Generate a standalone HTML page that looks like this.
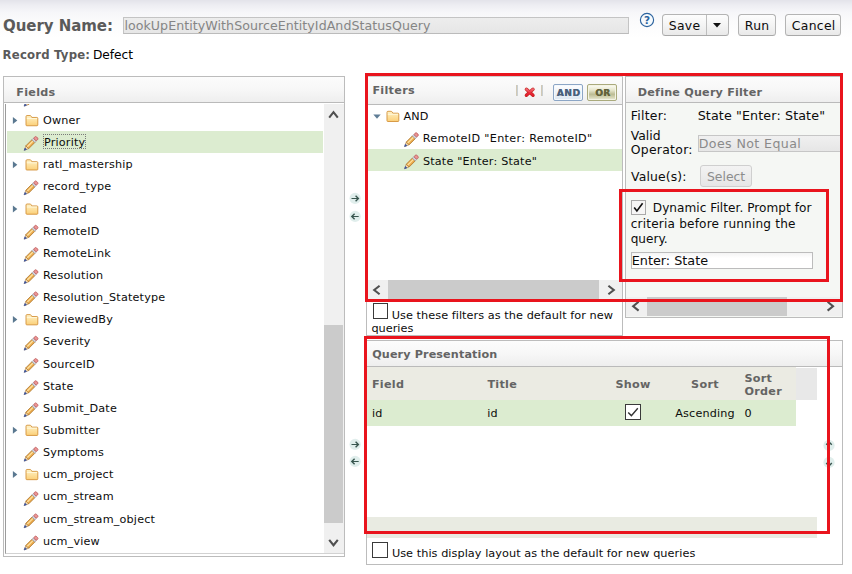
<!DOCTYPE html>
<html><head><meta charset="utf-8"><title>Query</title>
<style>
html,body{margin:0;padding:0;background:#fff;}
body{width:852px;height:574px;overflow:hidden;position:relative;font-family:"DejaVu Sans","Liberation Sans",sans-serif;font-size:11.4px;color:#0c0c0c;}
#root{position:absolute;left:0;top:0;width:852px;height:574px;overflow:hidden;background:#fff;}
.abs{position:absolute;}
.t{position:absolute;white-space:nowrap;line-height:1;}
#topgrad{left:0;top:0;width:852px;height:40px;background:linear-gradient(#e3e3ea 0px,#ededf2 5px,#f6f6f9 12px,#fbfbfc 22px,#fff 38px);}
.btn{position:absolute;box-sizing:border-box;border:1px solid #b4b4b4;border-bottom-color:#a8a8a8;border-radius:3.5px;background:linear-gradient(#fdfdfd,#f4f4f4 50%,#e9e9e9);top:14px;height:22px;}
.btn .t{font-size:12.4px;top:5px;margin-left:-0.2px;letter-spacing:0.3px;}
.panel{position:absolute;box-sizing:border-box;border:1px solid #bcbcbc;background:#fff;}
.phead{position:absolute;left:0;top:0;right:0;box-sizing:border-box;border-bottom:1px solid #bababa;background:linear-gradient(#fcfcfc,#f7f7f7 50%,#eeeeee);}
.ptitle{position:absolute;white-space:nowrap;line-height:1;font-weight:bold;color:#646464;font-size:11.2px;letter-spacing:0.3px;}
.row{position:absolute;left:0;right:0;height:22.2px;}
.sel{background:#dcecd0;}
.ic{position:absolute;overflow:visible;}
.red{position:absolute;box-sizing:border-box;border:3px solid #e9141d;}
.cb{position:absolute;box-sizing:border-box;border:1px solid #3a3a3a;background:#fff;}
</style></head><body>
<svg width="0" height="0" style="position:absolute">
<defs>
<linearGradient id="fg" x1="0" y1="0" x2="0" y2="1"><stop offset="0" stop-color="#fff3c8"/><stop offset="1" stop-color="#fbcf78"/></linearGradient>
<symbol id="folder" viewBox="0 0 14 12" overflow="visible">
<path d="M1.7 10.8 V2.4 Q1.7 1.4 2.7 1.4 H5.7 Q6.5 1.4 6.9 2.1 L7.5 3.3 H12.6 Q13.5 3.3 13.5 4.2 V10.8 Q13.5 11.6 12.7 11.6 H2.5 Q1.7 11.6 1.7 10.8 Z" fill="url(#fg)" stroke="#d4923a" stroke-width="0.9"/>
<path d="M2.5 4.4 H12.7" stroke="#fffbe6" stroke-width="0.8" fill="none"/>
</symbol>
<symbol id="pencil" viewBox="0 0 16 16" overflow="visible">
<g transform="translate(0.8,15.3) rotate(-45)">
<polygon points="0,0 4.4,-2 4.4,2" fill="#f2d8ac" stroke="#a87c44" stroke-width="0.6"/>
<polygon points="0,0 2.2,-1 2.2,1" fill="#3452a4" stroke="#3452a4" stroke-width="0.6"/>
<rect x="4.4" y="-2" width="8.6" height="4" fill="#ecaa4c" stroke="#b07a32" stroke-width="0.8"/>
<rect x="4.7" y="-1" width="8.1" height="1.3" fill="#fde2a0"/>
<rect x="13" y="-2" width="2" height="4" fill="#d6d6de" stroke="#94949e" stroke-width="0.6"/>
<rect x="15" y="-2" width="3.2" height="4" rx="1.4" fill="#ec9494" stroke="#bc5c5c" stroke-width="0.8"/>
</g>
</symbol>
<symbol id="tri" viewBox="0 0 5 8" overflow="visible"><polygon points="0.2,0.2 4.6,3.7 0.2,7.2" fill="#5a7890"/></symbol>
<symbol id="trid" viewBox="0 0 8 5" overflow="visible"><polygon points="0.3,0.4 7.7,0.4 4,4.6" fill="#5f7d96"/></symbol>
<symbol id="arrR" viewBox="0 0 12 13" overflow="visible"><circle cx="6" cy="6.4" r="5.6" fill="#e0eeec"/><path d="M2.4 6.5 H9" stroke="#38564f" stroke-width="1" fill="none"/><path d="M6.5 3.7 L9.3 6.5 L6.5 9.3" stroke="#38564f" stroke-width="1.4" fill="none"/></symbol>
<symbol id="arrL" viewBox="0 0 12 13" overflow="visible"><circle cx="6" cy="6.4" r="5.6" fill="#e0eeec"/><path d="M9.6 6.5 H3" stroke="#38564f" stroke-width="1" fill="none"/><path d="M5.5 3.7 L2.7 6.5 L5.5 9.3" stroke="#38564f" stroke-width="1.4" fill="none"/></symbol>
<symbol id="arrU" viewBox="0 0 12 13" overflow="visible"><circle cx="6.5" cy="6.4" r="5.6" fill="#e0eeec"/><path d="M6.5 9.8 V3.2" stroke="#38564f" stroke-width="1" fill="none"/><path d="M3.7 5.7 L6.5 2.9 L9.3 5.7" stroke="#38564f" stroke-width="1.4" fill="none"/></symbol>
<symbol id="arrD" viewBox="0 0 12 13" overflow="visible"><circle cx="6.5" cy="6.4" r="5.6" fill="#e0eeec"/><path d="M6.5 3 V9.6" stroke="#38564f" stroke-width="1" fill="none"/><path d="M3.7 7.1 L6.5 9.9 L9.3 7.1" stroke="#38564f" stroke-width="1.4" fill="none"/></symbol>
</defs></svg>
<div id="root">
<div id="topgrad" class="abs"></div>
<div class="t" style="left:3.0px;top:19.00px;font-size:15px;font-weight:bold;color:#5a5a5a;letter-spacing:-0.05px;">Query Name:</div>
<div class="abs" style="left:123px;top:17px;width:506px;height:17px;box-sizing:border-box;border:1px solid #c4c4c4;border-bottom-color:#bbb;background:linear-gradient(#ededed,#e6e6e6)"></div>
<div class="t" style="left:124.4px;top:20.00px;font-size:12.6px;color:#858585;letter-spacing:0.06px;">lookUpEntityWithSourceEntityIdAndStatusQuery</div>
<svg class="ic" style="left:638px;top:11px" width="18" height="18"><circle cx="9" cy="9" r="6.6" fill="#f6fafd" stroke="#2c639e" stroke-width="1.15"/><text x="9" y="13" text-anchor="middle" font-family="DejaVu Sans, sans-serif" font-weight="bold" font-size="10.5" fill="#2c639e">?</text></svg>
<div class="btn" style="left:662px;width:67px"><div class="t" style="left:6px">Save</div><div class="abs" style="left:42.5px;top:0;width:1px;height:20px;background:#bdbdbd"></div><svg class="ic" style="left:50px;top:7.5px" width="8" height="5"><polygon points="0,0 8,0 4,4.5" fill="#111"/></svg></div>
<div class="btn" style="left:738px;width:38px"><div class="t" style="left:6px">Run</div></div>
<div class="btn" style="left:785px;width:55.5px"><div class="t" style="left:6px">Cancel</div></div>
<div class="t" style="left:2.6px;top:50.00px;font-size:11.7px;font-weight:bold;color:#5a5a5a;letter-spacing:0.2px;">Record Type:</div>
<div class="t" style="left:92.9px;top:49.00px;font-size:12.2px;color:#000;">Defect</div>
<div class="panel" style="left:3px;top:76px;width:342px;height:481px">
<div class="phead" style="height:26px"></div>
</div>
<div class="ptitle" style="left:16.2px;top:87.00px">Fields</div>
<div class="abs" style="left:5px;top:104px;width:339px;height:450px;box-sizing:border-box;border-left:1px solid #9c9c9c;border-bottom:1px solid #d2d2d2"></div>
<div class="t" style="left:42.9px;top:115.00px;font-size:11.2px;letter-spacing:0.19px;">Owner</div>
<div class="abs sel" style="left:7px;top:130.8px;width:316px;height:21.8px"></div>
<div class="abs" style="left:43px;top:134px;width:42.5px;height:15px;box-sizing:border-box;border:1px dotted #7a7a7a"></div>
<div class="t" style="left:44.0px;top:137.00px;font-size:11.2px;letter-spacing:0.19px;">Priority</div>
<div class="t" style="left:42.9px;top:159.00px;font-size:11.2px;letter-spacing:0.19px;">ratl_mastership</div>
<div class="t" style="left:42.9px;top:181.00px;font-size:11.2px;letter-spacing:0.19px;">record_type</div>
<div class="t" style="left:42.9px;top:204.00px;font-size:11.2px;letter-spacing:0.19px;">Related</div>
<div class="t" style="left:42.9px;top:226.00px;font-size:11.2px;letter-spacing:0.19px;">RemoteID</div>
<div class="t" style="left:42.9px;top:248.00px;font-size:11.2px;letter-spacing:0.19px;">RemoteLink</div>
<div class="t" style="left:42.9px;top:270.00px;font-size:11.2px;letter-spacing:0.19px;">Resolution</div>
<div class="t" style="left:42.9px;top:292.00px;font-size:11.2px;letter-spacing:0.19px;">Resolution_Statetype</div>
<div class="t" style="left:42.9px;top:314.00px;font-size:11.2px;letter-spacing:0.19px;">ReviewedBy</div>
<div class="t" style="left:42.9px;top:336.00px;font-size:11.2px;letter-spacing:0.19px;">Severity</div>
<div class="t" style="left:42.9px;top:359.00px;font-size:11.2px;letter-spacing:0.19px;">SourceID</div>
<div class="t" style="left:42.9px;top:381.00px;font-size:11.2px;letter-spacing:0.19px;">State</div>
<div class="t" style="left:42.9px;top:403.00px;font-size:11.2px;letter-spacing:0.19px;">Submit_Date</div>
<div class="t" style="left:42.9px;top:425.00px;font-size:11.2px;letter-spacing:0.19px;">Submitter</div>
<div class="t" style="left:42.9px;top:447.00px;font-size:11.2px;letter-spacing:0.19px;">Symptoms</div>
<div class="t" style="left:42.9px;top:469.00px;font-size:11.2px;letter-spacing:0.19px;">ucm_project</div>
<div class="t" style="left:42.9px;top:491.00px;font-size:11.2px;letter-spacing:0.19px;">ucm_stream</div>
<div class="t" style="left:42.9px;top:514.00px;font-size:11.2px;letter-spacing:0.19px;">ucm_stream_object</div>
<div class="t" style="left:42.9px;top:536.00px;font-size:11.2px;letter-spacing:0.19px;">ucm_view</div>
<div class="abs" style="left:324px;top:104px;width:20px;height:449px;background:#f0f0f0"></div>
<div class="abs" style="left:324px;top:324.7px;width:19px;height:198px;background:#cbcbcb"></div>
<svg class="ic" style="left:324px;top:104px" width="20" height="20"><polyline points="5.2,13.6 9.5,8.2 13.8,13.6" fill="none" stroke="#505050" stroke-width="2.1"/></svg>
<svg class="ic" style="left:324px;top:533px" width="20" height="20"><polyline points="5.2,6.8 9.5,12.2 13.8,6.8" fill="none" stroke="#505050" stroke-width="2.1"/></svg>
<div class="panel" style="left:366px;top:76px;width:257px;height:260px;border-top-color:#d0d0d0">
<div class="phead" style="height:28px"></div>
</div>
<div class="ptitle" style="left:372.4px;top:85.00px">Filters</div>
<div class="abs" style="left:516px;top:85px;width:2px;height:10.5px;background:linear-gradient(90deg,#d6c6a6,#c4d2e2)"></div>
<div class="abs" style="left:541px;top:85px;width:2px;height:10.5px;background:linear-gradient(90deg,#d6c6a6,#c4d2e2)"></div>
<svg class="ic" style="left:523.5px;top:86.6px" width="12" height="11"><defs><linearGradient id="xg" x1="0" y1="0" x2="0" y2="1" gradientUnits="userSpaceOnUse" gradientTransform="scale(1,11)"><stop offset="0.15" stop-color="#f4707c"/><stop offset="0.55" stop-color="#ec2838"/><stop offset="0.9" stop-color="#d81626"/></linearGradient></defs><path d="M2.4 2.3 L9.0 8.3 M9.0 2.3 L2.4 8.3" stroke="#c42a24" stroke-width="3.4" stroke-linecap="round"/><path d="M2.4 2.3 L9.0 8.3 M9.0 2.3 L2.4 8.3" stroke="url(#xg)" stroke-width="2.2" stroke-linecap="round"/></svg>
<div class="abs" style="left:553px;top:84px;width:29.6px;height:16.6px;box-sizing:border-box;border:1px solid #8ca6c6;border-radius:2px;background:linear-gradient(#fff,#eef3f9 45%,#dde7f2);box-shadow:inset 0 0 0 1px #f4f8fc"><div class="t" style="left:2.7px;top:4px;font-size:9px;font-weight:bold;color:#4a607c;letter-spacing:0.6px;text-shadow:0.3px 0 0 #4a607c">AND</div></div>
<div class="abs" style="left:587px;top:84px;width:29.6px;height:16.6px;box-sizing:border-box;border:1px solid #aaaa7c;border-radius:2px;background:linear-gradient(#fdfdf6,#e6e6cc 35%,#bcbc94 62%,#d8d8b8 85%,#ecece0);box-shadow:inset 0 0 0 1px #f4f4e4"><div class="t" style="left:7.2px;top:4px;font-size:9px;font-weight:bold;color:#62623a;letter-spacing:0.3px;text-shadow:0.3px 0 0 #62623a">OR</div></div>


<div class="t" style="left:403.4px;top:111.00px;font-size:11.2px;letter-spacing:0.19px;">AND</div>

<div class="t" style="left:422.7px;top:133.00px;font-size:11.2px;letter-spacing:0.33px;">RemoteID "Enter: RemoteID"</div>
<div class="abs sel" style="left:368px;top:148.8px;width:254px;height:22.2px"></div>

<div class="t" style="left:422.9px;top:156.00px;font-size:11.2px;letter-spacing:0.2px;">State "Enter: State"</div>
<div class="abs" style="left:367px;top:280px;width:255px;height:19px;background:#f0f0f0"></div>
<div class="abs" style="left:388px;top:280px;width:211px;height:19px;background:#cbcbcb"></div>
<svg class="ic" style="left:368px;top:280.6px" width="20" height="18"><polyline points="11.6,4.7 6.2,9 11.6,13.3" fill="none" stroke="#505050" stroke-width="2.1"/></svg>
<svg class="ic" style="left:602px;top:280.6px" width="20" height="18"><polyline points="6.4,4.7 11.8,9 6.4,13.3" fill="none" stroke="#505050" stroke-width="2.1"/></svg>
<div class="cb" style="left:372.5px;top:303px;width:15.5px;height:15.5px"></div>
<div class="t" style="left:391.7px;top:310.00px;font-size:11.3px;letter-spacing:0.04px;">Use these filters as the default for new</div>
<div class="t" style="left:371.4px;top:323.00px;font-size:11.3px;">queries</div>
<div class="panel" style="left:625px;top:76px;width:218px;height:242px;background:#f5f7f4">
<div class="phead" style="height:26px"></div>
</div>
<div class="ptitle" style="letter-spacing:0.2px;left:637.8px;top:87.00px">Define Query Filter</div>
<div class="t" style="left:630.7px;top:110.00px;font-size:12.4px;letter-spacing:0.28px;">Filter:</div>
<div class="t" style="left:697.7px;top:110.00px;font-size:12.7px;letter-spacing:0.12px;">State "Enter: State"</div>
<div class="t" style="left:630.7px;top:130.00px;font-size:12.4px;">Valid</div>
<div class="t" style="left:630.7px;top:144.00px;font-size:12.4px;letter-spacing:0.3px;">Operator:</div>
<div class="abs" style="left:698px;top:135.3px;width:144px;height:16.7px;box-sizing:border-box;border:1px solid #c6c6c6;border-right:none;background:linear-gradient(#f0f0f0,#e6e6e6)"></div>
<div class="t" style="left:698.7px;top:138.00px;font-size:12.6px;color:#8a8a8a;letter-spacing:0.4px;">Does Not Equal</div>
<div class="t" style="left:631.0px;top:171.00px;font-size:12.4px;letter-spacing:0.15px;">Value(s):</div>
<div class="abs" style="left:700px;top:165px;width:52px;height:22px;box-sizing:border-box;border:1px solid #cfcfcf;border-radius:3px;background:linear-gradient(#f3f3f3,#e6e6e6)"></div>
<div class="t" style="left:707.0px;top:171.00px;font-size:12.4px;color:#8c8c8c;">Select</div>
<div class="abs" style="left:631.2px;top:200px;width:15px;height:15px;box-sizing:border-box;border:1px solid #a9a9a9;background:#f6f6f6"></div>
<svg class="ic" style="left:631.2px;top:200px" width="15" height="15"><path d="M3.2 7.4 L5.9 11 L11.6 3.2" fill="none" stroke="#111" stroke-width="1.6"/></svg>
<div class="t" style="left:652.8px;top:202.00px;font-size:12.1px;letter-spacing:0.04px;">Dynamic Filter. Prompt for</div>
<div class="t" style="left:630.7px;top:218.00px;font-size:12.1px;letter-spacing:0.19px;">criteria before running the</div>
<div class="t" style="left:630.7px;top:233.00px;font-size:12.1px;">query.</div>
<div class="abs" style="left:631px;top:252px;width:181.5px;height:17px;box-sizing:border-box;border:1px solid #bcbcbc;background:linear-gradient(#f4f4f4,#fff 35%)"></div>
<div class="t" style="left:631.7px;top:255.00px;font-size:12.8px;">Enter: State</div>
<div class="abs" style="left:626px;top:297px;width:216px;height:19px;background:#f0f0f0"></div>
<div class="abs" style="left:647px;top:297px;width:140px;height:19px;background:#cbcbcb"></div>
<svg class="ic" style="left:626px;top:297px" width="20" height="18"><polyline points="12.6,4.8 7.2,9.2 12.6,13.6" fill="none" stroke="#505050" stroke-width="2.1"/></svg>
<svg class="ic" style="left:821px;top:297px" width="20" height="18"><polyline points="6.6,4.8 12,9.2 6.6,13.6" fill="none" stroke="#505050" stroke-width="2.1"/></svg>
<div class="panel" style="left:366px;top:340px;width:477px;height:225px">
<div class="phead" style="height:26px"></div>
</div>
<div class="ptitle" style="letter-spacing:0.12px;left:372.2px;top:349.00px">Query Presentation</div>
<div class="abs" style="left:367px;top:367px;width:429px;height:32.7px;background:#ebebe3"></div>
<div class="abs" style="left:796px;top:368px;width:21px;height:31.7px;background:#e8e8e8"></div>
<div class="abs sel" style="left:367px;top:399.7px;width:429px;height:26px"></div>
<div class="abs" style="left:367px;top:516.8px;width:450px;height:21px;background:#e9ebe2"></div>
<div class="t" style="left:371.9px;top:379.00px;font-size:11.2px;font-weight:bold;color:#646464;letter-spacing:0.28px;">Field</div>
<div class="t" style="left:487.4px;top:379.00px;font-size:11.2px;font-weight:bold;color:#646464;letter-spacing:0.28px;">Title</div>
<div class="t" style="left:615.4px;top:379.00px;font-size:11.2px;font-weight:bold;color:#646464;letter-spacing:0.28px;">Show</div>
<div class="t" style="left:691.1px;top:379.00px;font-size:11.2px;font-weight:bold;color:#646464;letter-spacing:0.28px;">Sort</div>
<div class="t" style="left:744.4px;top:373.00px;font-size:11.2px;font-weight:bold;color:#646464;letter-spacing:0.28px;">Sort</div>
<div class="t" style="left:744.4px;top:386.00px;font-size:11.2px;font-weight:bold;color:#646464;letter-spacing:0.28px;">Order</div>
<div class="t" style="left:371.9px;top:408.00px;font-size:11.2px;letter-spacing:0.19px;">id</div>
<div class="t" style="left:487.2px;top:408.00px;font-size:11.2px;letter-spacing:0.19px;">id</div>
<div class="cb" style="left:625px;top:403.7px;width:16px;height:16px"></div>
<svg class="ic" style="left:625px;top:403.7px" width="16" height="16"><path d="M3.2 8.4 L6.4 11.6 L12.8 4.2" fill="none" stroke="#333" stroke-width="1.4"/></svg>
<div class="t" style="left:675.2px;top:408.00px;font-size:11.2px;letter-spacing:0.19px;">Ascending</div>
<div class="t" style="left:744.4px;top:408.00px;font-size:11.2px;letter-spacing:0.19px;">0</div>
<div class="cb" style="left:371.8px;top:541.8px;width:16px;height:16px"></div>
<div class="t" style="left:391.9px;top:548.00px;font-size:11.3px;letter-spacing:0.04px;">Use this display layout as the default for new queries</div>
<svg class="ic" style="left:0;top:0" width="852" height="574" viewBox="0 0 852 574"><use href="#tri" x="12.70" y="116.80" width="5" height="8"/><use href="#folder" x="24.30" y="114.15" width="14" height="12"/><use href="#pencil" x="23.40" y="135.00" width="16" height="16"/><use href="#tri" x="12.70" y="161.04" width="5" height="8"/><use href="#folder" x="24.30" y="158.39" width="14" height="12"/><use href="#pencil" x="23.40" y="179.40" width="16" height="16"/><use href="#tri" x="12.70" y="205.28" width="5" height="8"/><use href="#folder" x="24.30" y="202.63" width="14" height="12"/><use href="#pencil" x="23.40" y="223.80" width="16" height="16"/><use href="#pencil" x="23.40" y="246.00" width="16" height="16"/><use href="#pencil" x="23.40" y="268.20" width="16" height="16"/><use href="#pencil" x="23.40" y="290.40" width="16" height="16"/><use href="#tri" x="12.70" y="315.88" width="5" height="8"/><use href="#folder" x="24.30" y="313.23" width="14" height="12"/><use href="#pencil" x="23.40" y="334.80" width="16" height="16"/><use href="#pencil" x="23.40" y="357.00" width="16" height="16"/><use href="#pencil" x="23.40" y="379.20" width="16" height="16"/><use href="#pencil" x="23.40" y="401.40" width="16" height="16"/><use href="#tri" x="12.70" y="426.48" width="5" height="8"/><use href="#folder" x="24.30" y="423.83" width="14" height="12"/><use href="#pencil" x="23.40" y="445.80" width="16" height="16"/><use href="#tri" x="12.70" y="470.72" width="5" height="8"/><use href="#folder" x="24.30" y="468.07" width="14" height="12"/><use href="#pencil" x="23.40" y="490.20" width="16" height="16"/><use href="#pencil" x="23.40" y="512.40" width="16" height="16"/><use href="#pencil" x="23.40" y="534.60" width="16" height="16"/><svg x="0" y="104" width="60" height="10" viewBox="0 104 60 10"><use href="#pencil" x="23.4" y="90.8" width="16" height="16"/></svg><use href="#arrR" x="349.10" y="192.00" width="12" height="13"/><use href="#arrL" x="349.10" y="210.00" width="12" height="13"/><use href="#arrR" x="349.10" y="438.00" width="12" height="13"/><use href="#arrL" x="349.10" y="455.00" width="12" height="13"/><use href="#arrU" x="822.50" y="439.00" width="12" height="13"/><use href="#arrD" x="822.50" y="456.00" width="12" height="13"/><use href="#trid" x="373.00" y="114.20" width="8" height="5"/><use href="#folder" x="385.30" y="109.90" width="14" height="12"/><use href="#pencil" x="403.80" y="131.20" width="16" height="16"/><use href="#pencil" x="403.80" y="153.40" width="16" height="16"/></svg>
<div class="red" style="left:365px;top:73px;width:478px;height:229px"></div>
<div class="red" style="left:619px;top:189px;width:210px;height:93px"></div>
<div class="red" style="left:364px;top:336px;width:466px;height:198px"></div>
</div>
</body></html>
